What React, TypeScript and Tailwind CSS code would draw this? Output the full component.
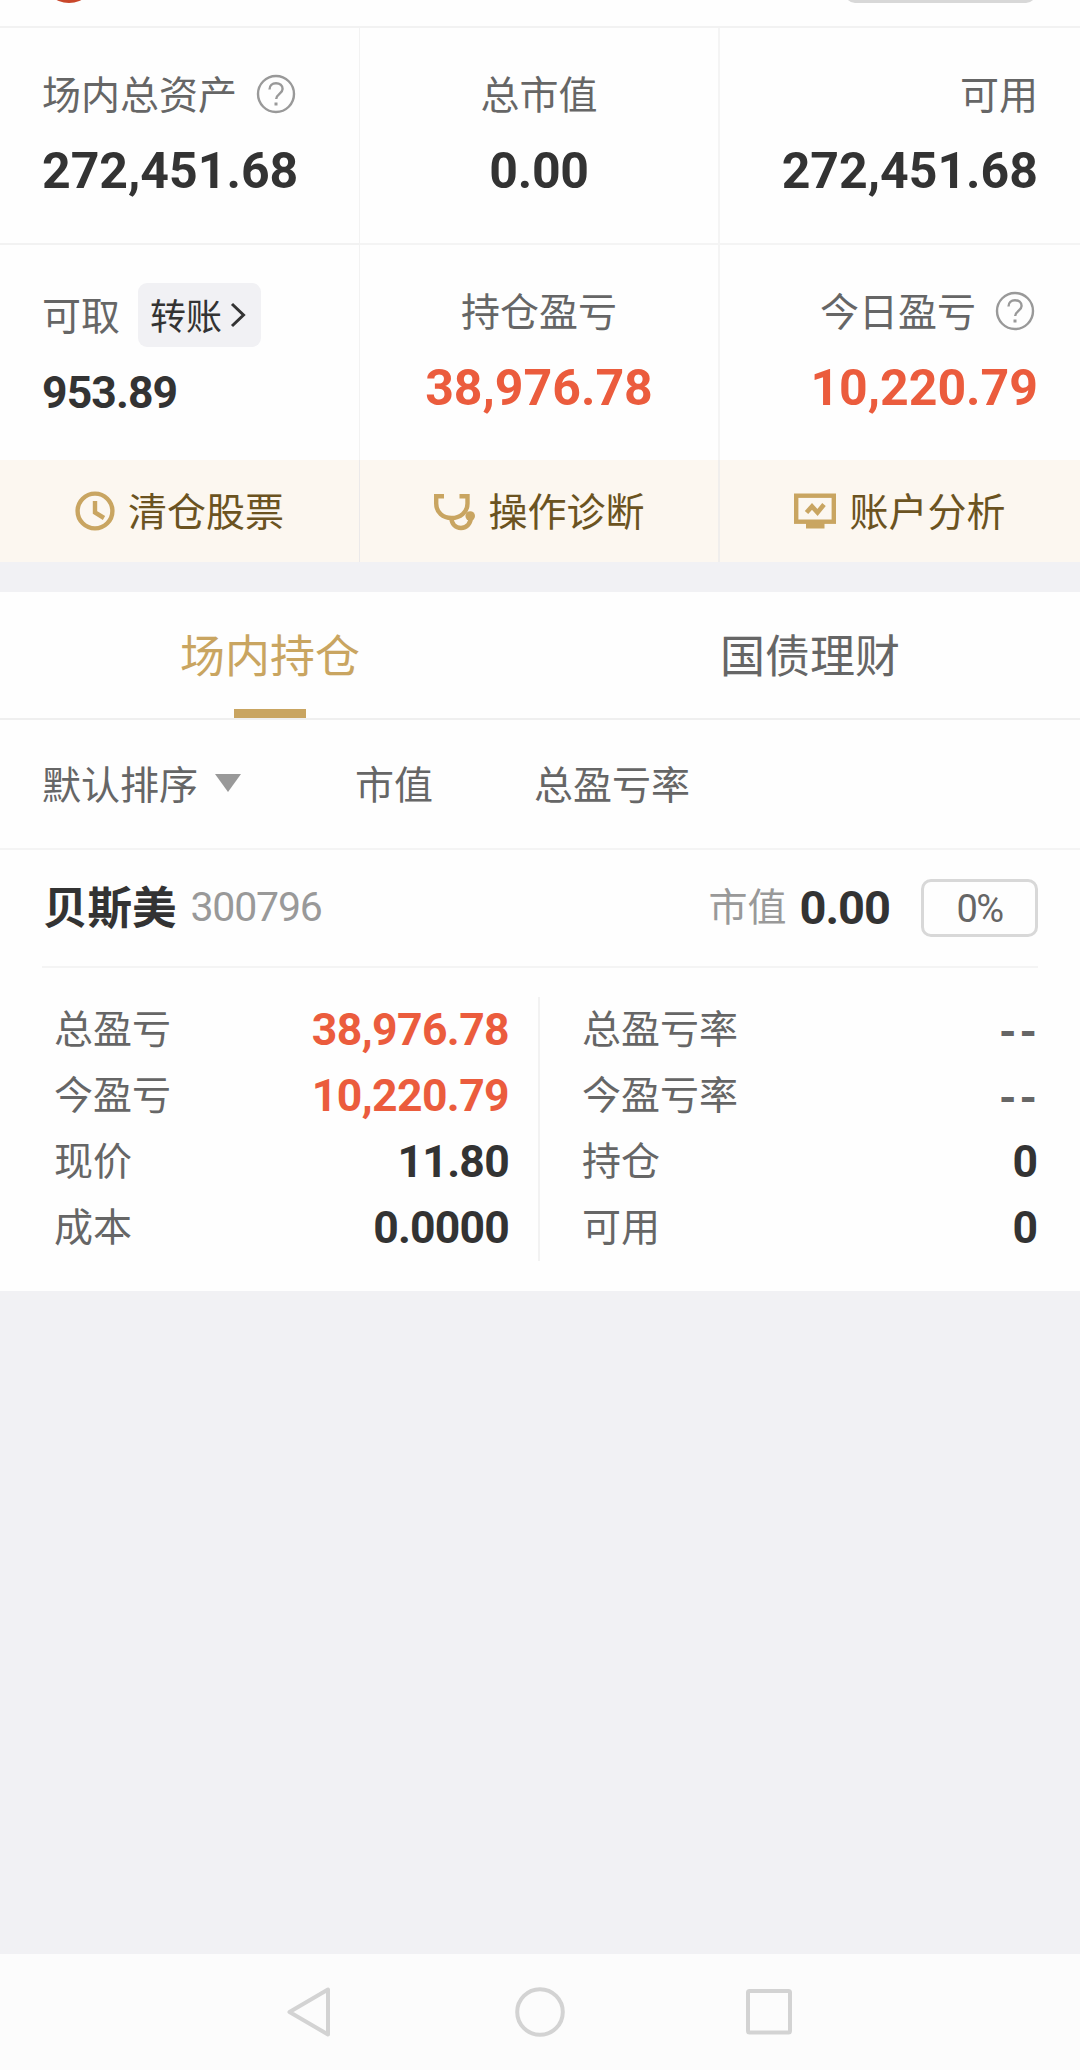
import React from "react";

const CJK = "font-['Noto_Sans_CJK_SC',sans-serif]";
const NUM = "font-['Roboto',sans-serif]";
const LABEL = `${CJK} text-[39px] leading-[56px] text-[#666666] whitespace-nowrap`;
const BIG = `${NUM} mt-[21px] text-[50px] leading-[60px] font-bold whitespace-nowrap`;

function Help() {
  return (
    <svg width="40" height="40" viewBox="0 0 40 40" fill="none" stroke="#999999" className="mt-[3px] shrink-0">
      <circle cx="20" cy="20" r="18" strokeWidth="2.4" />
      <path d="M13.500 15.500c0-4 2.800-6.300 6.500-6.300s6.600 2.300 6.600 5.800c0 4.600-6.400 5.200-6.400 10" strokeWidth="2.400" />
      <path d="M18.500 30h3" strokeWidth="3" />
    </svg>
  );
}

function Clock() {
  return (
    <svg width="40" height="40" viewBox="0 0 40 40" fill="none" stroke="#c9a561" strokeWidth="4.400">
      <circle cx="20" cy="20" r="17.400" />
      <path d="M20 10v11.500l9 5.500" />
    </svg>
  );
}

function Stethoscope() {
  return (
    <svg width="42" height="40" viewBox="0 0 42 40" fill="none" stroke="#c9a561" strokeWidth="4.400">
      <path d="M11 5.200H3.200v7.300C3.200 21.500 10 27 18.500 27S34.500 21.500 34.500 12.500V5.200H26.500" />
      <path d="M18.500 27c0 6 4 10 9.500 10 6 0 10-5 9.800-11" />
      <circle cx="37.200" cy="25" r="4.800" fill="#c9a561" stroke="none" />
    </svg>
  );
}

function Monitor() {
  return (
    <svg width="42" height="40" viewBox="0 0 42 40" fill="none" stroke="#c9a561">
      <rect x="2.200" y="4.700" width="37.600" height="26" strokeWidth="4.400" />
      <path d="M12 32h18.500v5.500H12z" fill="#c9a561" stroke="none" />
      <path d="M12.500 21.500l5.500-6 5.500 6 6.500-8" strokeWidth="4.600" />
    </svg>
  );
}

const actions = [
  { icon: <Clock />, label: "清仓股票", edge: "border-r border-[#ebe9e9]" },
  { icon: <Stethoscope />, label: "操作诊断", edge: "border-r-2 border-[#f0eeec]" },
  { icon: <Monitor />, label: "账户分析", edge: "" },
];

const left = [
  { label: "总盈亏", value: "38,976.78", tone: "tracking-[-0.6px] text-[#eb5c3d]" },
  { label: "今盈亏", value: "10,220.79", tone: "tracking-[-0.6px] text-[#eb5c3d]" },
  { label: "现价", value: "11.80", tone: "tracking-[-0.7px] text-[#333333]" },
  { label: "成本", value: "0.0000", tone: "tracking-[-0.8px] text-[#333333]" },
];

const right = [
  { label: "总盈亏率", value: "--", tone: "pt-[3px] tracking-[3px] -mr-[2px] text-[#666666]" },
  { label: "今盈亏率", value: "--", tone: "pt-[3px] tracking-[3px] -mr-[2px] text-[#666666]" },
  { label: "持仓", value: "0", tone: "text-[#333333]" },
  { label: "可用", value: "0", tone: "text-[#333333]" },
];

function Rows({ rows }: { rows: typeof left }) {
  return (
    <>
      {rows.map((r) => (
        <div key={r.label} className="flex h-[66px] items-center justify-between">
          <span className={`${LABEL} -mt-[8px]`}>{r.label}</span>
          <span className={`${NUM} text-[44.5px] leading-[66px] font-bold ${r.tone}`}>{r.value}</span>
        </div>
      ))}
    </>
  );
}

export default function App() {
  return (
    <div className="flex h-[2070px] w-[1080px] flex-col overflow-hidden bg-[#f1f1f4]">
      <header className="flex h-[28px] items-start justify-between border-b-2 border-[#f2f2f2] bg-[#fefefe] pr-[44px] pl-[42px]">
        <div className="-mt-[51px] size-[54px] shrink-0 rounded-full bg-[#c9472b]" />
        <div className="-mt-[57px] h-[60px] w-[191px] rounded-[10px] border-[3px] border-[#d8d8d8]" />
      </header>

      <section className="grid grid-cols-3 bg-[#fefefe]">
        <div className="h-[217px] border-r border-b-2 border-[#f2f2f2] pt-[36px] pl-[42px]">
          <div className="flex h-[56px] items-center gap-[19px]">
            <span className={LABEL}>场内总资产</span>
            <Help />
          </div>
          <div className={`${BIG} text-[#333333]`}>272,451.68</div>
        </div>
        <div className="h-[217px] border-r-2 border-b-2 border-[#f4f4f4] pt-[36px] text-center">
          <div className={LABEL}>总市值</div>
          <div className={`${BIG} tracking-[-0.3px] text-[#333333]`}>0.00</div>
        </div>
        <div className="h-[217px] border-b-2 border-[#f4f4f4] pt-[36px] pr-[42px] text-right">
          <div className={LABEL}>可用</div>
          <div className={`${BIG} text-[#333333]`}>272,451.68</div>
        </div>

        <div className="h-[215px] border-r border-[#f2f2f2] pt-[38px] pl-[42px]">
          <div className="flex h-[64px] items-center gap-[18px]">
            <span className={`${LABEL} -mt-[5px]`}>可取</span>
            <div className="flex h-[64px] w-[123px] items-center gap-[8px] rounded-[9px] bg-[#f1f1f4] pl-[12px]">
              <span className={`${CJK} -mt-[3px] text-[36px] leading-[56px] text-[#333333]`}>转账</span>
              <svg width="16" height="26" viewBox="0 0 16 26" fill="none" stroke="#333333" strokeWidth="3">
                <path d="M2 2l11.500 11L2 24" />
              </svg>
            </div>
          </div>
          <div className={`${NUM} mt-[16px] text-[44.5px] leading-[60px] font-bold tracking-[-0.9px] text-[#333333]`}>953.89</div>
        </div>
        <div className="h-[215px] border-r-2 border-[#f4f4f4] pt-[36px] text-center">
          <div className={LABEL}>持仓盈亏</div>
          <div className={`${BIG} text-[#eb5c3d]`}>38,976.78</div>
        </div>
        <div className="h-[215px] pt-[36px] pr-[42px] text-right">
          <div className="flex h-[56px] items-center justify-end gap-[19px] pr-[3px]">
            <span className={LABEL}>今日盈亏</span>
            <Help />
          </div>
          <div className={`${BIG} text-[#eb5c3d]`}>10,220.79</div>
        </div>
      </section>

      <section className="grid h-[102px] grid-cols-3 bg-[#fcf7f0]">
        {actions.map((a) => (
          <div key={a.label} className={`flex items-center justify-center gap-[13px] ${a.edge}`}>
            {a.icon}
            <span className={`${CJK} -mt-1 text-[39px] leading-[56px] text-[#6b5321]`}>{a.label}</span>
          </div>
        ))}
      </section>

      <nav className="mt-[30px] grid h-[128px] grid-cols-2 border-b-2 border-[#efefef] bg-[#fefefe]">
        <div className="flex flex-col items-center justify-between pt-[29px]">
          <span className={`${CJK} text-[45px] leading-[66px] text-[#c9a561]`}>场内持仓</span>
          <div className="h-[9px] w-[72px] bg-[#c9a561]" />
        </div>
        <div className="flex flex-col items-center pt-[29px]">
          <span className={`${CJK} text-[45px] leading-[66px] text-[#666666]`}>国债理财</span>
        </div>
      </nav>

      <div className="flex h-[130px] items-center border-b-2 border-[#f4f4f4] bg-[#fefefe] pl-[42px]">
        <div className="flex w-[313px] items-center gap-[17px]">
          <span className={`${LABEL} -mt-[5px]`}>默认排序</span>
          <svg width="26" height="18" viewBox="0 0 26 18" fill="#999999" className="-mt-[2px]">
            <path d="M0 0h26L13 18z" />
          </svg>
        </div>
        <span className={`${LABEL} -mt-[5px] w-[179px]`}>市值</span>
        <span className={`${LABEL} -mt-[5px]`}>总盈亏率</span>
      </div>

      <section className="h-[441px] bg-[#fefefe] px-[42px]">
        <div className="flex h-[118px] items-center border-b-2 border-[#f4f4f4]">
          <span className={`${CJK} -mt-[6px] ml-px text-[44.5px] leading-[66px] font-bold text-[#333333]`}>贝斯美</span>
          <span className={`${NUM} -mt-[2px] ml-[14px] text-[41px] leading-[56px] tracking-[-1.2px] text-[#999999]`}>300796</span>
          <span className={`${CJK} -mt-[8px] ml-auto text-[39px] leading-[56px] text-[#999999]`}>市值</span>
          <span className={`${NUM} ml-[13px] text-[47px] leading-[60px] font-bold tracking-[-1px] text-[#333333]`}>0.00</span>
          <div className={`${NUM} ml-[31px] flex h-[58px] w-[117px] items-center justify-center rounded-[10px] border-[3px] border-[#d8d8d8] pt-[2px] text-[38px] leading-[50px] tracking-[-1.5px] text-[#666666]`}>
            0%
          </div>
        </div>
        <div className="mt-[29px] grid h-[264px] grid-cols-[498px_498px]">
          <div className="border-r-2 border-[#f2f2f2] pr-[29px] pl-[12px]">
            <Rows rows={left} />
          </div>
          <div className="pl-[42px]">
            <Rows rows={right} />
          </div>
        </div>
      </section>

      <footer className="mt-auto flex h-[116px] justify-center gap-[180px] bg-[#fcfcfc] pt-[33px]">
        <svg width="48" height="50" viewBox="0 0 48 50" fill="none" stroke="#d3d3d3" strokeWidth="4" strokeLinejoin="round">
          <path d="M41 2.500v45L2.500 25z" />
        </svg>
        <svg width="50" height="50" viewBox="0 0 50 50" fill="none" stroke="#d3d3d3" strokeWidth="4">
          <circle cx="25" cy="25" r="22.800" />
        </svg>
        <svg width="48" height="50" viewBox="0 0 48 50" fill="none" stroke="#d3d3d3" strokeWidth="4">
          <rect x="3" y="4" width="42" height="41.500" rx="1.500" />
        </svg>
      </footer>
    </div>
  );
}
